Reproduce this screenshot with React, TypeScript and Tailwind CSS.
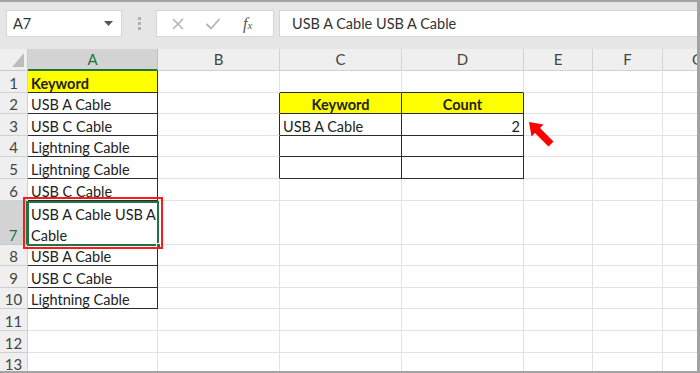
import React from "react";

const font = { fontFamily: "Lato, 'Open Sans', sans-serif" };

const cols = ["A", "B", "C", "D", "E", "F", "G"];
const rowHeights = [21.6, 21.6, 21.6, 21.6, 21.6, 21.6, 44, 21.6, 21.6, 21.6, 21.6, 21.6, 21.6];

type Cell = { text?: string; lines?: string[]; bold?: boolean; yellow?: boolean; align?: "left" | "center" | "right" };

const data: Record<string, Cell> = {
  A1: { text: "Keyword", bold: true, yellow: true },
  A2: { text: "USB A Cable" },
  A3: { text: "USB C Cable" },
  A4: { text: "Lightning Cable" },
  A5: { text: "Lightning Cable" },
  A6: { text: "USB C Cable" },
  A7: { lines: ["USB A Cable USB A", "Cable"] },
  A8: { text: "USB A Cable" },
  A9: { text: "USB C Cable" },
  A10: { text: "Lightning Cable" },
  C2: { text: "Keyword", bold: true, yellow: true, align: "center" },
  D2: { text: "Count", bold: true, yellow: true, align: "center" },
  C3: { text: "USB A Cable" },
  D3: { text: "2", align: "right" },
};

function darkRight(c: string, r: number) {
  if (c === "A" && r >= 1 && r <= 10) return true;
  if ((c === "B" || c === "C" || c === "D") && r >= 2 && r <= 5) return true;
  return false;
}
function darkBottom(c: string, r: number) {
  if (c === "A" && r >= 1 && r <= 10) return true;
  if ((c === "C" || c === "D") && r >= 1 && r <= 5) return true;
  return false;
}

export default function App() {
  return (
    <div
      className="w-[700px] h-[373px] overflow-hidden bg-[#e6e6e6] border-t-2 border-r-[3px] border-b-2 border-[#a3a3a3] flex flex-col relative"
      style={font}
    >
      {/* Toolbar */}
      <div className="h-[47px] shrink-0 flex items-start pt-[8px]">
        <div className="ml-[6px] w-[116px] h-[27px] bg-white border border-[#d6d6d6] flex items-center justify-between pl-[6px] pr-[8px]">
          <span className="text-[14.5px] text-[#333]">A7</span>
          <svg width="9" height="5" viewBox="0 0 9 5">
            <polygon points="0,0 9,0 4.5,5" fill="#555" />
          </svg>
        </div>
        <div className="w-[34px] h-[27px] flex flex-col items-center justify-center gap-[2px]">
          <div className="w-[3px] h-[3px] bg-[#b0b0b0]" />
          <div className="w-[3px] h-[3px] bg-[#b0b0b0]" />
          <div className="w-[3px] h-[3px] bg-[#b0b0b0]" />
        </div>
        <div className="w-[118px] h-[27px] bg-white border border-[#d6d6d6] flex items-center">
          <svg width="14" height="14" viewBox="0 0 14 14" className="ml-[14px]">
            <path d="M2 2 L12 12 M12 2 L2 12" stroke="#b4b4b4" strokeWidth="1.6" />
          </svg>
          <svg width="16" height="14" viewBox="0 0 16 14" className="ml-[20px]">
            <path d="M1.5 7 L6 11.5 L14.5 2" stroke="#b4b4b4" strokeWidth="1.8" fill="none" />
          </svg>
          <span
            className="ml-[22px] text-[16px] italic text-[#555]"
            style={{ fontFamily: "'Liberation Serif', serif" }}
          >
            f<span className="text-[11px]">x</span>
          </span>
        </div>
        <div className="ml-[5px] flex-1 h-[27px] bg-white border border-[#d6d6d6] border-r-0 flex items-center pl-[12px]">
          <span className="text-[14.5px] text-[#333]">USB A Cable USB A Cable</span>
        </div>
      </div>

      {/* Sheet */}
      <div className="flex-1 bg-white overflow-hidden">
        <div className="grid grid-cols-[28px_130px_122px_122px_122px_69px_70px_70px] w-[733px]">
          {/* header row */}
          <div className="h-[22px] bg-[#efefef] border-r border-b border-[#c8c8c8] flex items-end justify-end pr-[3px] pb-[3px]">
            <svg width="12" height="14" viewBox="0 0 12 14">
              <polygon points="12,0 12,14 0,14" fill="#bdbdbd" />
            </svg>
          </div>
          {cols.map((c) =>
            c === "A" ? (
              <div
                key={c}
                className="h-[22px] bg-[#d3d3d3] border-r border-[#c0c0c0] border-b-2 border-b-[#217346] flex items-center justify-center text-[15px] text-[#217346]"
              >
                {c}
              </div>
            ) : (
              <div
                key={c}
                className="h-[22px] bg-[#efefef] border-r border-b border-[#d2d2d2] flex items-center justify-center text-[15px] text-[#444]"
              >
                {c}
              </div>
            )
          )}

          {rowHeights.map((h, i) => {
            const r = i + 1;
            const sel = r === 7;
            return (
              <React.Fragment key={r}>
                <div
                  className={
                    sel
                      ? "bg-[#d3d3d3] border-r-2 border-r-[#217346] border-b border-b-[#c8c8c8] flex items-end justify-center text-[15px] text-[#217346] leading-[21px] overflow-hidden"
                      : "bg-[#efefef] border-r border-b border-[#d0d0d0] flex items-end justify-center text-[15px] text-[#444] leading-[21px] overflow-hidden"
                  }
                  style={{ height: h }}
                >
                  <span className="block translate-y-[2px]">{r}</span>
                </div>
                {cols.map((c) => {
                  const cell = data[c + r];
                  const rd = darkRight(c, r);
                  const bd = darkBottom(c, r);
                  const cls = [
                    "border-r border-b px-[3px] text-[14.5px] text-[#222] leading-[21px] overflow-hidden flex items-end whitespace-nowrap",
                    rd ? "border-r-[#2b2b2b]" : "border-r-[#e2e2e2]",
                    bd ? "border-b-[#2b2b2b]" : "border-b-[#e2e2e2]",
                    cell?.yellow ? "bg-[#ffff00]" : "bg-white",
                    cell?.bold ? "font-bold" : "",
                    cell?.align === "center" ? "justify-center text-center" : cell?.align === "right" ? "justify-end text-right" : "",
                  ].join(" ");
                  return (
                    <div key={c} className={cls} style={{ height: h }}>
                      {cell?.text ? <span className="block translate-y-[2px]">{cell.text}</span> : null}
                      {cell?.lines ? (
                        <div className="flex flex-col translate-y-[2px]">
                          {cell.lines.map((l) => (
                            <span key={l} className="block">
                              {l}
                            </span>
                          ))}
                        </div>
                      ) : null}
                    </div>
                  );
                })}
              </React.Fragment>
            );
          })}
        </div>
      </div>

      {/* selection overlay for A7 */}
      <div className="absolute left-[27px] top-[199px] w-[132px] h-[45px] border-2 border-[#217346] pointer-events-none">
        <div className="absolute right-[-4px] bottom-[-4px] w-[5px] h-[5px] bg-[#217346] border border-white" />
      </div>
      {/* red highlight box */}
      <div className="absolute left-[23px] top-[195px] w-[140px] h-[52px] border-2 border-[#ff1a1a] pointer-events-none" />

      {/* red arrow */}
      <svg className="absolute left-[526px] top-[117px]" width="30" height="30" viewBox="0 0 30 30">
        <polygon
          points="3,3 17.5,5.5 14,9 27.5,22.5 22.5,27.5 9,14 5.5,17.5"
          fill="#ff0000"
        />
      </svg>
    </div>
  );
}
